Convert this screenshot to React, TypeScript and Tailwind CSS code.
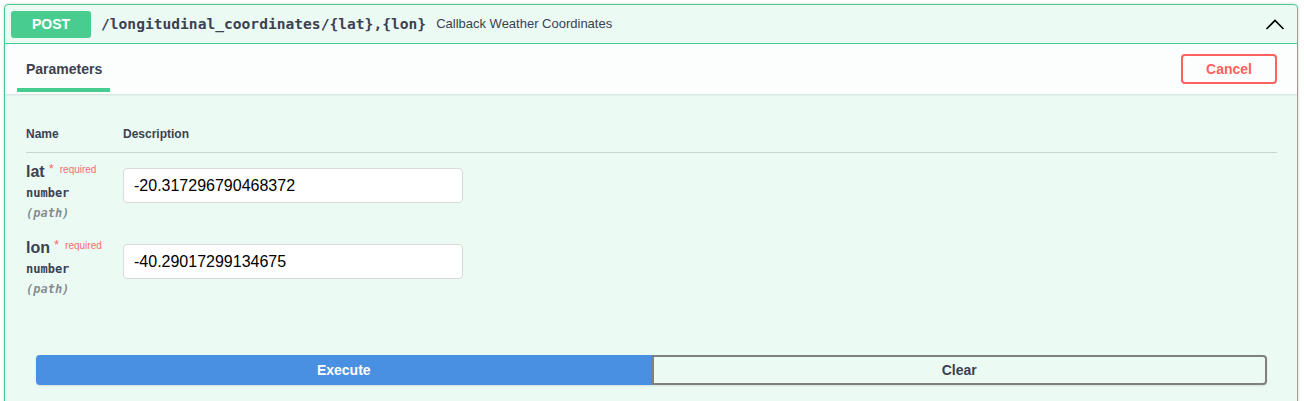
import React from 'react';

const sans = "font-['Liberation_Sans',Arial,sans-serif]";
const mono = "font-['DejaVu_Sans_Mono','Liberation_Mono',monospace]";

const params = [
  { name: 'lat', type: 'number', value: '-20.317296790468372' },
  { name: 'lon', type: 'number', value: '-40.29017299134675' },
];

const App = () => {
  return (
    <div className={`bg-white pt-1 pl-1 pr-[6px] h-[401px] overflow-hidden ${sans}`}>
      <div className="border border-[#49cc90] rounded bg-[#49cc90]/10 shadow-[0_0_3px_rgba(0,0,0,0.19)]">
        {/* Summary */}
        <div className="flex items-center h-[39px] px-[6px] border-b border-[#49cc90]">
          <span className="w-[80px] h-[27px] flex items-center justify-center rounded-[3px] bg-[#49cc90] text-white text-sm font-bold">
            POST
          </span>
          <span className={`ml-[10px] text-[14.6px] font-bold text-[#3b4151] ${mono}`}>
            /longitudinal_coordinates/{'{lat}'},{'{lon}'}
          </span>
          <span className="ml-[10px] text-[13px] text-[#3b4151]">Callback Weather Coordinates</span>
          <svg className="ml-auto mr-[6px]" width="20" height="20" viewBox="0 0 20 20" fill="none">
            <path d="M1.5 15L10 6.5L18.5 15" stroke="#000" strokeWidth="1.6" />
          </svg>
        </div>

        {/* Section header */}
        <div className="flex items-center justify-between h-[50px] px-5 bg-white/80 shadow-[0_1px_2px_rgba(0,0,0,0.1)]">
          <div className="relative h-full flex items-center pl-[1px]">
            <h4 className="text-sm font-bold text-[#3b4151]">Parameters</h4>
            <div className="absolute left-[-8px] right-[-8px] bottom-[2px] h-1 bg-[#49cc90]" />
          </div>
          <button className="w-[96px] h-[30px] border-2 border-[#ff6060] rounded text-[#ff6060] text-sm font-bold bg-transparent">
            Cancel
          </button>
        </div>

        {/* Parameters table */}
        <div className="pl-[21px] pr-5 pt-5">
          <div className="flex h-[39px] items-center pt-[2px] border-b border-[#3b4151]/20 text-xs font-bold text-[#3b4151]">
            <div className="w-[97px]">Name</div>
            <div>Description</div>
          </div>
          {params.map((p) => (
            <div key={p.name} className="flex h-[76px]">
              <div className="w-[97px] pt-[9px]">
                <div className="h-5 flex items-center text-[#3b4151]">
                  <span className="text-base font-bold">{p.name}</span>
                  <span className="relative -top-[3px] ml-[4px] text-[10px] text-[#ff0000]/60">
                    <span className="text-[13px]">*</span>
                    <span className="ml-[6px]">required</span>
                  </span>
                </div>
                <div className={`h-5 leading-5 pt-[1px] text-xs font-semibold text-[#3b4151] ${mono}`}>{p.type}</div>
                <div className={`h-5 leading-5 pt-[1px] text-xs italic font-semibold text-[#3b4151]/60 ${mono}`}>(path)</div>
              </div>
              <div className="pt-[15px]">
                <input
                  defaultValue={p.value}
                  className="w-[340px] h-[35px] px-[10px] bg-white border border-[#d9d9d9] rounded text-base text-black outline-none"
                />
              </div>
            </div>
          ))}
        </div>

        {/* Execute / Clear */}
        <div className="flex pl-[31px] pr-[30px] pt-[50px] pb-10">
          <button className="flex-1 h-[30px] bg-[#4990e2] border-2 border-[#4990e2] rounded-l text-white text-sm font-bold shadow-[0_1px_2px_rgba(0,0,0,0.1)]">
            Execute
          </button>
          <button className="flex-1 h-[30px] bg-transparent border-2 border-[#808080] rounded-r text-[#3b4151] text-sm font-bold shadow-[0_1px_2px_rgba(0,0,0,0.1)]">
            Clear
          </button>
        </div>
      </div>
    </div>
  );
};

export default App;
